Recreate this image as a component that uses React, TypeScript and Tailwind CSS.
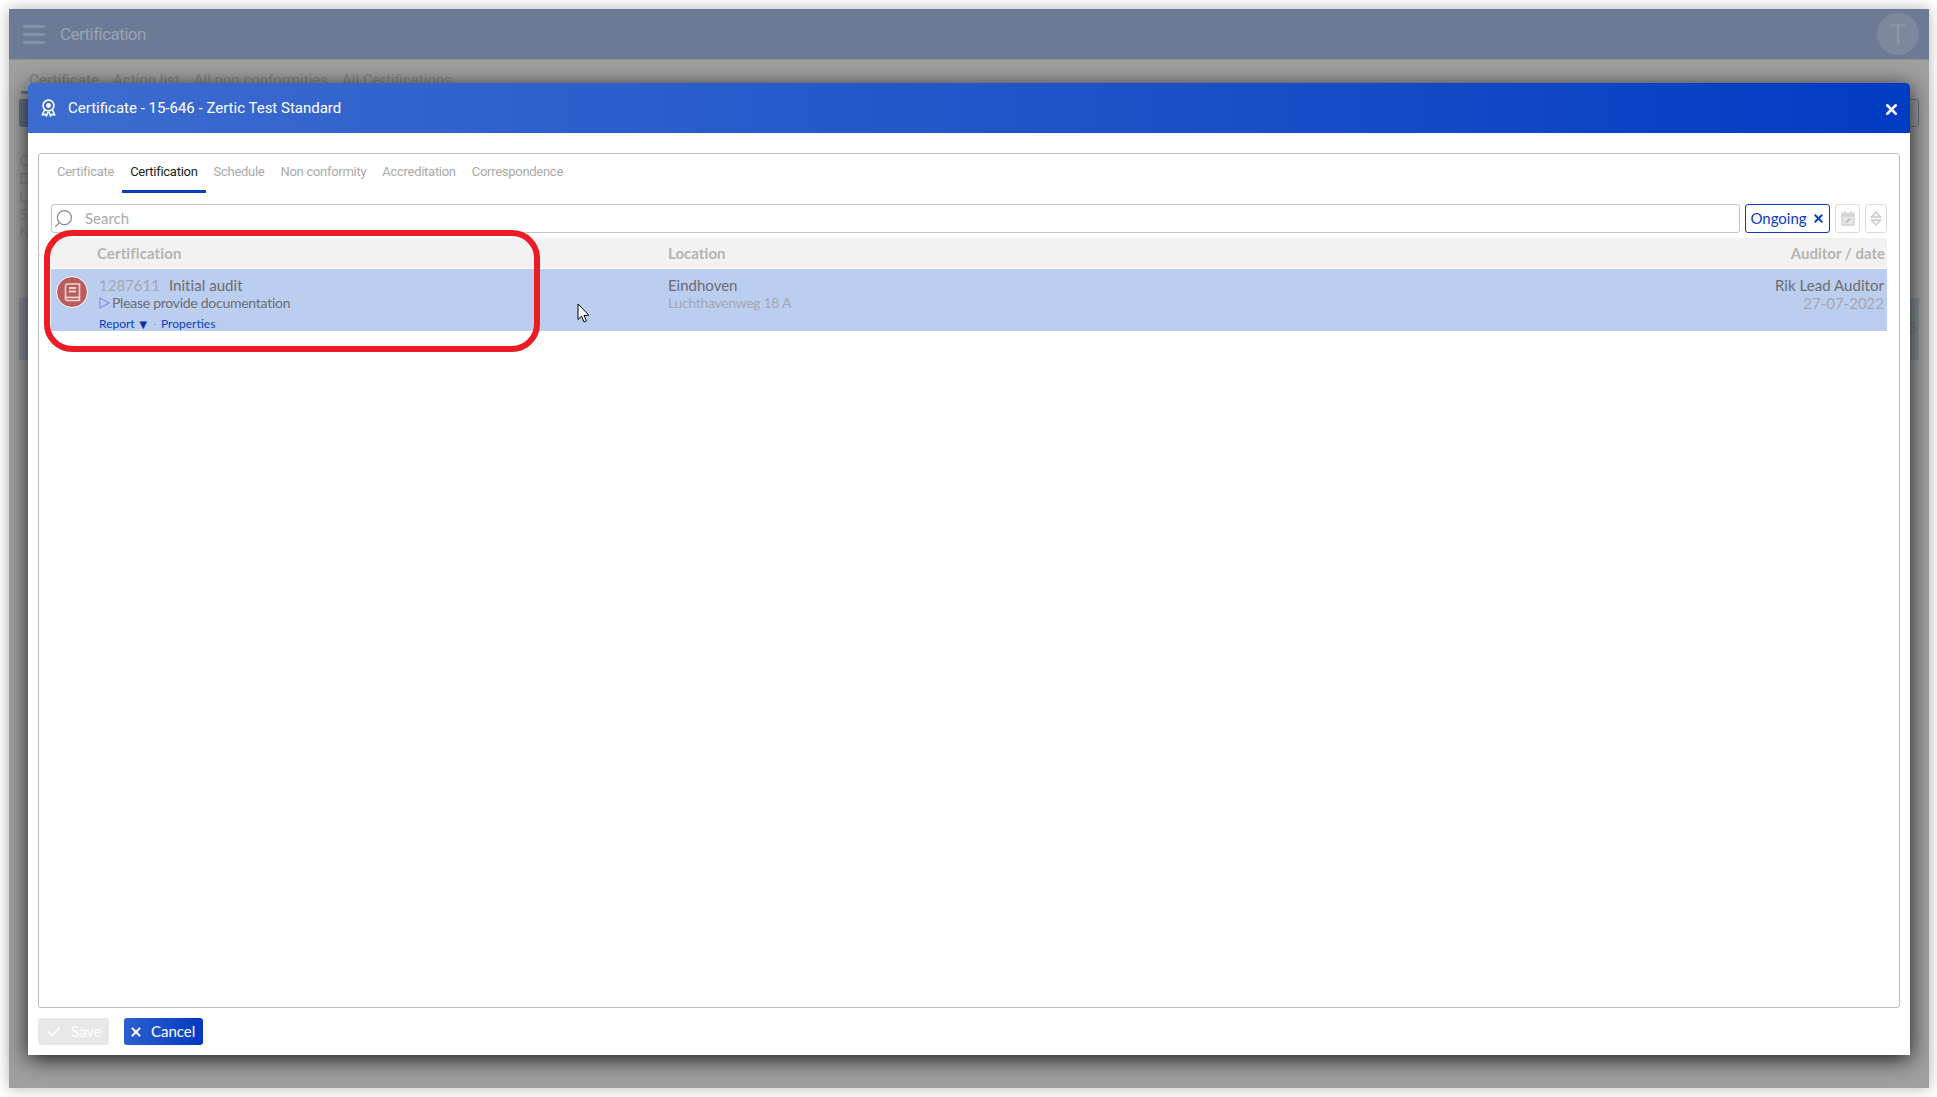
import React from "react";
import { X, Check, Search } from "lucide-react";

function Ribbon() {
  return (
    <svg width="15" height="18" viewBox="0 0 15 18" fill="none" stroke="white" strokeWidth="1.6">
      <circle cx="7.5" cy="6.5" r="5.4" />
      <circle cx="7.5" cy="6.5" r="2.4" fill="white" stroke="none" />
      <path d="M3.5 11 L1.2 16 L4 15.2 L5.4 17 L7 13 M11.5 11 L13.8 16 L11 15.2 L9.6 17 L8 13" strokeLinejoin="round" />
    </svg>
  );
}

function Book() {
  return (
    <svg width="17" height="19" viewBox="0 0 17 19" fill="none" stroke="#f3d3d3" strokeWidth="1.6">
      <path d="M1.5 15 V3 a2 2 0 0 1 2-2 H15.5 V17.5 H3.5 a2 2 0 0 1 -2-2.5 Z" />
      <path d="M1.5 14.4 H15.5" />
      <path d="M5 5 H12 M5 8.5 H12" strokeWidth="1.8" />
    </svg>
  );
}

function Cursor() {
  return (
    <svg width="13" height="21" viewBox="0 0 13 21">
      <path d="M1 1 V16.5 L4.6 13.2 L7 19 L9.4 18 L7 12.4 L11.8 12.2 Z" fill="white" stroke="black" strokeWidth="1" strokeLinejoin="round" />
    </svg>
  );
}

const tabs = ["Certificate", "Certification", "Schedule", "Non conformity", "Accreditation", "Correspondence"];

export default function App() {
  return (
    <div className="w-[1937px] h-[1097px] bg-white p-[9px] overflow-hidden font-['Lato','Liberation_Sans',sans-serif]">
      <div className="relative w-[1920px] h-[1079px] bg-[#a0a0a0] shadow-[0_0_14px_rgba(0,0,0,0.3)] flex flex-col">
        {/* Dimmed page behind the dialog */}
        <div className="h-[51px] shrink-0 bg-[#6d7a95] border-b border-[#8f8f8f] flex items-center pl-[14px] pr-[10px]">
          <div className="w-[22px] flex flex-col gap-[5px]">
            <span className="h-[3px] bg-[#8390a8]" />
            <span className="h-[3px] bg-[#8390a8]" />
            <span className="h-[3px] bg-[#8390a8]" />
          </div>
          <span className="ml-[15px] mt-[1px] text-[17px] tracking-[-0.55px] text-[#98a2b5] font-['Roboto',sans-serif]">Certification</span>
          <div className="ml-auto w-[42px] h-[42px] rounded-full bg-[#7d889d] flex items-center justify-center text-[26px] text-[#8b95a8]">T</div>
        </div>
        <div className="flex-1 flex flex-col px-[10px] pt-[10px] text-[#8b8b8b]">
          <div className="ml-[10px] flex gap-[14px] text-[15px] leading-5 font-['Roboto',sans-serif] text-[#868686]">
            <span className="font-medium">Certificate</span>
            <span>Action list</span>
            <span>All non conformities</span>
            <span>All Certifications</span>
          </div>
          <div className="mt-[1px] ml-[2px] h-[3px] w-[40px] bg-[#67738c]" />
          <div className="mt-[5px] flex justify-between">
            <div className="h-[28px] w-[40px] bg-[#67738c] rounded-[3px]" />
            <div className="h-[28px] w-[40px] border border-[#67738c] rounded-[3px]" />
          </div>
          <div className="mt-[24px] flex flex-col text-[15px] leading-[18px] text-[#8a8a8a]">
            <span>C</span>
            <span>D</span>
            <span>L</span>
            <span>5</span>
            <span>N</span>
          </div>
          <div className="mt-[57px] h-[62px] flex justify-between">
            <div className="w-[40px] bg-[#8b8f99]" />
            <div className="w-[40px] bg-[#8b8f99] flex flex-col items-end pt-[15px] pr-[2px]">
              <div className="w-[6px] h-[5px] bg-[#7f9a7f]" />
              <span className="text-[15px] leading-[18px] text-[#7c7f88]">3</span>
            </div>
          </div>
        </div>
      </div>

      {/* Dialog */}
      <div className="absolute left-[28px] top-[83px] w-[1882px] h-[972px] bg-white rounded-t-[4px] shadow-[0_4px_22px_rgba(0,0,0,0.85)] flex flex-col">
        <div className="h-[50px] shrink-0 rounded-t-[4px] bg-gradient-to-r from-[#3d6ccf] to-[#003bc3] flex items-center pl-[13px] pr-[10px] text-white">
          <Ribbon />
          <span className="ml-[12px] mt-[1px] text-[15px] font-['Roboto',sans-serif]">Certificate - 15-646 - Zertic Test Standard</span>
          <X className="ml-auto mt-[3px]" size={17} strokeWidth={3.5} />
        </div>

        <div className="flex-1 flex flex-col px-[10px] pt-[20px] pb-[10px]">
          <div className="flex-1 border border-[#bdbdbd] rounded-[3px] flex flex-col px-[12px]">
            <div className="flex h-[39px] -ml-[2px] text-[13px] tracking-[-0.28px] font-['Roboto',sans-serif]">
              {tabs.map((t) => (
                <div
                  key={t}
                  className={
                    t === "Certification"
                      ? "px-[8px] flex items-center text-[#222] border-b-[3px] border-[#0a3fc0]"
                      : "px-[8px] flex items-center text-[#aaa] border-b-[3px] border-transparent"
                  }
                >
                  {t}
                </div>
              ))}
            </div>

            <div className="mt-[11px] flex h-[29px] gap-[5px]">
              <div className="flex-1 border border-[#c4c4c4] rounded-[3px] flex items-center pl-[1px]">
                <Search className="-scale-x-100 text-[#888]" size={21} strokeWidth={1.4} />
                <span className="ml-[11px] text-[15px] text-[#aaa]">Search</span>
              </div>
              <div className="w-[85px] border border-[#0a3fc0] rounded-[3px] flex items-center justify-center gap-[5px] text-[15px] text-[#0a3fc0]">
                <span>Ongoing</span>
                <X size={13} strokeWidth={3.5} />
              </div>
              <div className="w-[25px] border border-[#dcdcdc] rounded-[3px] flex items-center justify-center">
                <svg width="14" height="15" viewBox="0 0 14 15" fill="none" stroke="#d6d6d6" strokeWidth="1.6">
                  <rect x="1" y="2.5" width="12" height="11.5" fill="#e6e6e6" />
                  <path d="M1 2.5 H13 V5 H1 Z M4 0 V3 M10 0 V3" fill="#d6d6d6" />
                  <path d="M5 11.5 L9.5 7.5" stroke="#aaa" strokeWidth="1.2" />
                </svg>
              </div>
              <div className="w-[22px] border border-[#dcdcdc] rounded-[3px] flex items-center justify-center">
                <svg width="12" height="17" viewBox="0 0 12 17" fill="none" stroke="#c9c9c9" strokeWidth="1.5">
                  <path d="M1.5 7 L6 2 L10.5 7 Z M1.5 10 L6 15 L10.5 10 Z" />
                </svg>
              </div>
            </div>

            <div className="mt-[5px] h-[30px] bg-[#f2f2f2] flex items-center text-[15px] font-bold text-[#b5b5b5]">
              <span className="ml-[46px] w-[571px] tracking-[0.1px]">Certification</span>
              <span>Location</span>
              <span className="ml-auto mr-[2px]">Auditor / date</span>
            </div>
            <div className="mt-[1px] h-[62px] bg-[#bccef0] flex">
              <div className="w-[48px] pl-[5px] pt-[7px] shrink-0">
                <div className="w-[32px] h-[32px] rounded-full bg-[#b85c5c] border border-white flex items-center justify-center">
                  <Book />
                </div>
              </div>
              <div className="w-[569px] pt-[8px] flex flex-col">
                <div className="text-[15px] leading-[17px] flex gap-[9px]">
                  <span className="text-[#a3a7b2]">1287611</span>
                  <span className="text-[#6c6c70] tracking-[0.05px]">Initial audit</span>
                </div>
                <div className="flex items-center text-[14px] leading-[17px] text-[#6c6c70] tracking-[-0.27px]">
                  <svg width="11" height="12" viewBox="0 0 11 12" fill="none" stroke="#8f8cf0" strokeWidth="1.2" className="mr-[2px]">
                    <path d="M1 1 L10 6 L1 11 Z" />
                  </svg>
                  Please provide documentation
                </div>
                <div className="mt-[5px] flex items-center text-[12px] leading-[16px] text-[#0a3fc0]">
                  <span>Report</span>
                  <span className="ml-[2px] text-[13px] leading-[16px] text-[#0a2fa8]">▼</span>
                  <span className="ml-[3px] mr-[4px] text-[#9aa8c8]">-</span>
                  <span>Properties</span>
                </div>
              </div>
              <div className="pt-[8px] flex flex-col">
                <span className="text-[15px] leading-[17px] text-[#6c6c70]">Eindhoven</span>
                <span className="text-[14px] leading-[17px] text-[#a3a7b2] tracking-[-0.32px]">Luchthavenweg 18 A</span>
              </div>
              <div className="ml-auto pt-[8px] pr-[3px] flex flex-col items-end">
                <span className="text-[15px] leading-[17px] text-[#6c6c70] tracking-[0.05px]">Rik Lead Auditor</span>
                <span className="text-[15px] leading-[19px] text-[#a3a7b2]">27-07-2022</span>
              </div>
            </div>
          </div>

          <div className="mt-[10px] flex h-[27px] gap-[15px] text-[15px]">
            <div className="w-[71px] rounded-[3px] bg-[#e8e8e8] text-white flex items-center pl-[8px] gap-[9px]">
              <Check size={16} strokeWidth={2.5} />
              <span>Save</span>
            </div>
            <div className="w-[79px] rounded-[3px] bg-gradient-to-r from-[#2d5fcf] to-[#0039c0] text-white flex items-center pl-[5px] gap-[8px]">
              <X size={14} strokeWidth={3.5} />
              <span>Cancel</span>
            </div>
          </div>
        </div>
      </div>

      {/* Annotation callout and pointer */}
      <div className="absolute left-[44px] top-[230px] w-[496px] h-[122px] border-[6px] border-[#ed1c24] rounded-[28px]" />
      <div className="absolute left-[577px] top-[303px]">
        <Cursor />
      </div>
    </div>
  );
}
